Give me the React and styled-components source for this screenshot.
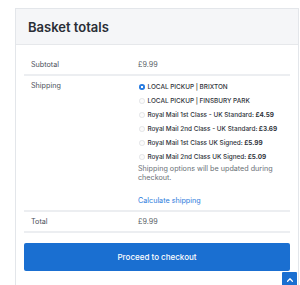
import React, { useState } from 'react';
import styled, { createGlobalStyle } from 'styled-components';

const GlobalStyle = createGlobalStyle`
  body {
    margin: 0;
    background: #ffffff;
    font-family: "Inter", "Noto Sans", sans-serif;
    color: #3c4047;
  }
`;

const options = [
  { id: 'brixton', label: 'LOCAL PICKUP | BRIXTON' },
  { id: 'finsbury', label: 'LOCAL PICKUP | FINSBURY PARK' },
  { id: 'rm1', label: 'Royal Mail 1st Class - UK Standard:', price: '£4.59' },
  { id: 'rm2', label: 'Royal Mail 2nd Class - UK Standard:', price: '£3.69' },
  { id: 'rm1s', label: 'Royal Mail 1st Class UK Signed:', price: '£5.99' },
  { id: 'rm2s', label: 'Royal Mail 2nd Class UK Signed:', price: '£5.09' },
];

function App() {
  const [method, setMethod] = useState('brixton');

  return (
    <>
      <GlobalStyle />
      <Card>
        <Header>
          <Title>Basket totals</Title>
        </Header>
        <Body>
          <Row>
            <Label>Subtotal</Label>
            <Value>£9.99</Value>
          </Row>
          <Row>
            <Label>Shipping</Label>
            <Value>
              <MethodList>
                {options.map((o) => (
                  <Method key={o.id} onClick={() => setMethod(o.id)}>
                    <Radio checked={method === o.id} />
                    <span>
                      {o.label}
                      {o.price && <Price> {o.price}</Price>}
                    </span>
                  </Method>
                ))}
              </MethodList>
              <Note>Shipping options will be updated during checkout.</Note>
              <CalcLink href="#">Calculate shipping</CalcLink>
            </Value>
          </Row>
          <Row>
            <Label>Total</Label>
            <Value>£9.99</Value>
          </Row>
          <CheckoutButton>Proceed to checkout</CheckoutButton>
        </Body>
      </Card>
      <ScrollTop aria-label="Back to top">
        <svg width="8" height="8" viewBox="0 0 10 10" fill="none">
          <path d="M2 6.5 L5 3.5 L8 6.5" stroke="#fff" strokeWidth="1.6" strokeLinecap="round" strokeLinejoin="round" />
        </svg>
      </ScrollTop>
    </>
  );
}

export default App;

const Card = styled.div`
  margin: 8px 0 0 15px;
  width: 284px;
  height: 280px;
  border: 1px solid #e3e6ea;
  box-sizing: border-box;
`;

const Header = styled.div`
  height: 35px;
  background: #f5f6f8;
  border-bottom: 1px solid #e6e8eb;
  display: flex;
  align-items: center;
  padding-left: 12px;
`;

const Title = styled.h2`
  margin: 0;
  font-size: 13px;
  font-weight: 600;
  color: #2a2e36;
`;

const Body = styled.div`
  padding: 10px 8px 0 8px;
`;

const Row = styled.div`
  display: grid;
  grid-template-columns: 107px 1fr;
  padding: 5px 0 5px 7px;
  border-bottom: 2px solid #eceef1;
  font-size: 7.2px;
  line-height: 9px;
`;

const Label = styled.div`
  color: #4a4f58;
`;

const Value = styled.div`
  color: #5a5f67;
`;

const MethodList = styled.ul`
  list-style: none;
  margin: 0;
  padding: 0;
`;

const Method = styled.li`
  display: flex;
  align-items: center;
  gap: 3px;
  height: 14px;
  margin-left: 1px;
  font-size: 6.4px;
  font-weight: 500;
  color: #2f333a;
  cursor: pointer;
  &:first-child {
    margin-top: -1px;
  }
`;

const Radio = styled.span`
  width: 5.5px;
  height: 5.5px;
  border-radius: 50%;
  box-sizing: border-box;
  flex: none;
  background: ${(p) =>
    p.checked
      ? 'radial-gradient(circle, #ffffff 0 28%, #2a7de1 34%)'
      : '#fbfbfb'};
  border: ${(p) => (p.checked ? 'none' : '0.6px solid #e2e4e7')};
`;

const Price = styled.span`
  font-weight: 700;
`;

const Note = styled.p`
  margin: 0;
  color: #6a6f76;
`;

const CalcLink = styled.a`
  display: block;
  margin: 14px 0 0;
  color: #2b7bdc;
  text-decoration: none;
`;

const CheckoutButton = styled.button`
  display: block;
  width: 100%;
  height: 28px;
  margin-top: 10px;
  border: none;
  border-radius: 2px;
  background: #1a6fd1;
  color: #ffffff;
  font-family: "Inter", "Noto Sans", sans-serif;
  font-size: 8px;
  font-weight: 500;
  cursor: pointer;
`;

const ScrollTop = styled.button`
  position: fixed;
  right: 3px;
  bottom: -2px;
  width: 15px;
  height: 15px;
  padding: 0;
  border: none;
  border-radius: 1px;
  background: #1a6fd1;
  display: flex;
  align-items: center;
  justify-content: center;
`;
